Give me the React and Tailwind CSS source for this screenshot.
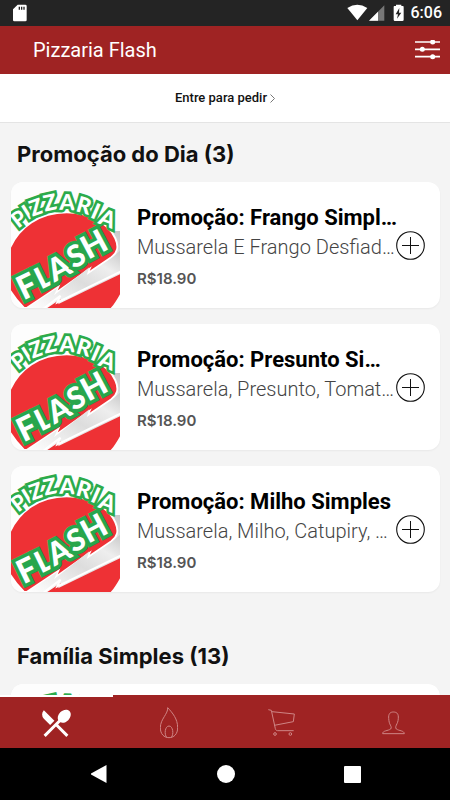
import { useState } from 'react';
import { MdRestaurantMenu } from 'react-icons/md';

const sections = [
	{
		id: 'promo',
		title: 'Promoção do Dia (3)',
		items: [
			{ id: 1, name: 'Promoção: Frango Simpl…', description: 'Mussarela E Frango Desfiad…', price: 'R$18.90' },
			{ id: 2, name: 'Promoção: Presunto Si…', description: 'Mussarela, Presunto, Tomat…', price: 'R$18.90' },
			{ id: 3, name: 'Promoção: Milho Simples', description: 'Mussarela, Milho, Catupiry, …', price: 'R$18.90' },
		],
	},
	{
		id: 'familia',
		title: 'Família Simples (13)',
		items: [{ id: 4, name: '', description: '', price: '' }],
	},
];

const tabs = [
	{ id: 'menu', label: 'Cardápio', icon: CutleryIcon },
	{ id: 'hot', label: 'Promoções', icon: FlameIcon },
	{ id: 'cart', label: 'Carrinho', icon: CartIcon },
	{ id: 'profile', label: 'Perfil', icon: PersonIcon },
];

// centre x, centre y, rotation, font size
const arcLetters = [
	['P', 56, 116, -38, 64],
	['I', 80, 96, -32, 64],
	['Z', 108, 81, -20, 66],
	['Z', 150, 67, -12, 66],
	['A', 202, 66, 2, 66],
	['R', 252, 76, 16, 66],
	['I', 287, 93, 24, 66],
	['A', 323, 115, 22, 68],
];

const flashLetters = [
	['F', 80, 318, -26, 98],
	['L', 130, 290, -26, 90],
	['A', 176, 262, -28, 94],
	['S', 228, 227, -26, 90],
	['H', 281, 192, -28, 96],
];

function CutleryIcon() {
	return <MdRestaurantMenu size={36} aria-hidden="true" />;
}

function FlameIcon() {
	return (
		<svg width="18" height="32" viewBox="0 0 54 96" fill="none" stroke="currentColor" strokeWidth="3" aria-hidden="true">
			<path d="M23 2 C25 20 1 36 1 62 C1 81 12 92 27 92 C42 92 53 81 53 62 C53 36 38 18 23 2Z" />
			<path d="M20 91 C12 82 15 57 27 57 C39 57 42 82 34 91" />
		</svg>
	);
}

function CartIcon() {
	return (
		<svg width="27" height="27" viewBox="0 0 81 81" fill="none" stroke="currentColor" strokeWidth="3" aria-hidden="true">
			<path d="M1 2 L10 4 L22 59 C23 63 25 65 29 65 L77 65" />
			<path d="M12 8 L79 15 L76 38 L19 49" />
			<circle cx="21" cy="75" r="4" />
			<circle cx="67" cy="75" r="4" />
		</svg>
	);
}

function PersonIcon() {
	return (
		<svg width="23" height="24" viewBox="0 0 69 72" fill="none" stroke="currentColor" strokeWidth="3" aria-hidden="true">
			<path d="M2 68 C2 58 18 60 26 54 C30 50 26 44 23 38 C21 33 20 24 20 18 C20 7 26 3 34 3 C43 3 49 7 49 18 C49 25 48 33 45 38 C42 44 39 50 43 54 C51 60 66 58 67 68Z" />
		</svg>
	);
}

function StatusBar() {
	return (
		<div className="flex h-[26px] shrink-0 items-center justify-between bg-[#242424] pr-2 pl-[13px] text-white">
			<svg width="14" height="18" viewBox="0 0 42 54" aria-hidden="true">
				<path d="M14 2 H37 Q41 2 41 6 V48 Q41 52 37 52 H4 Q0 52 0 48 V16Z" fill="#fff" />
				<path d="M17 8h4v9h-4z M24 8h4v9h-4z M31 8h4v9h-4z" fill="#242424" />
			</svg>
			<div className="flex items-center gap-1.5">
				<svg width="58" height="18" viewBox="0 0 174 54" aria-hidden="true">
					<path d="M1 12 Q31 -8 61 12 L31 49Z" fill="#fff" />
					<path d="M66 50 L112 4 V50Z" fill="#777" />
					<path d="M66 50 L93 23 V50Z" fill="#fff" />
					<path d="M142 6h5V2h16v4h5q2 0 2 4v37q0 4-4 4h-22q-4 0-4-4V10q0-4 2-4z" fill="#fff" />
					<path d="M157 12 L146 31 H153 L150 44 L163 26 H156Z" fill="#242424" />
				</svg>
				<span className="font-[Roboto] text-base leading-6 font-medium">6:06</span>
			</div>
		</div>
	);
}

function LogoLetters({ letters, stroke, strokeWidth }) {
	return (
		<g
			fontFamily="Lato, sans-serif"
			fontWeight="900"
			textAnchor="middle"
			paintOrder="stroke"
			fill="#fff"
			stroke={stroke}
			strokeWidth={strokeWidth}
			strokeMiterlimit="2"
		>
			{letters.map(([char, x, y, angle, size], i) => (
				<text key={i} x="0" y={size * 0.36} fontSize={size} transform={`translate(${x} ${y}) rotate(${angle})`}>
					{char}
				</text>
			))}
		</g>
	);
}

function Logo({ id }) {
	const gradId = `grey-${id}`;

	return (
		<svg className="block h-full w-full" viewBox="33 6 327 378" preserveAspectRatio="xMidYMin slice" aria-hidden="true">
			<defs>
				<linearGradient id={gradId} x1="0" y1="1" x2="1" y2="0">
					<stop offset="0" stopColor="#fff" />
					<stop offset="0.5" stopColor="#ddd" />
					<stop offset="0.75" stopColor="#eee" />
					<stop offset="1" stopColor="#c4c4c4" />
				</linearGradient>
			</defs>
			<rect x="28" y="6" width="340" height="378" fill="#fdfdfd" />
			<path d="M320 153 H368 V290 L150 384 H80Z" fill={`url(#${gradId})`} />
			<path d="M26 212 C55 140 120 97 200 97 C265 97 325 128 346 175 C358 202 352 218 334 232 L262 281 L268 268 L166 340 L174 322 L80 384 H72 C50 362 38 345 26 325Z" fill="#ee3135" stroke="#fff" strokeWidth="6" />
			<path d="M82 384 L172 324 L162 346 L268 262 L260 286 L338 232 L368 205 V276 L172 365 L181 350 L128 384Z" fill={`url(#${gradId})`} />
			<path d="M142 384 L182 357 L174 373 L364 281 V335 C354 355 345 370 332 384Z" fill="#ee3135" />
			<path d="M128 388 L181 347 L172 367 L368 272" fill="none" stroke="#fff" strokeWidth="6" />
			<LogoLetters letters={arcLetters} stroke="#2bab4b" strokeWidth="16" />
			<LogoLetters letters={flashLetters} stroke="#27a64c" strokeWidth="22" />
		</svg>
	);
}

function ProductCard({ item }) {
	return (
		<li className="flex h-[126px] overflow-hidden rounded-xl bg-white shadow-xs">
			<div className="w-[109px] shrink-0">
				<Logo id={item.id} />
			</div>
			<div className="flex min-w-0 flex-1 items-center pr-[15px] pl-[17px]">
				<div className="min-w-0 flex-1 pt-[3px] whitespace-nowrap">
					<h3 className="font-[Roboto] text-[22px] leading-7 font-bold text-black">{item.name}</h3>
					<p className="font-[Roboto] text-xl leading-[30px] font-light text-[#444]">{item.description}</p>
					<p className="mt-[7px] font-[Inter] text-[15px] leading-5 font-semibold text-[#555]">{item.price}</p>
				</div>
				<button type="button" aria-label={`Adicionar ${item.name}`} className="shrink-0">
					<svg width="29" height="29" viewBox="0 0 29 29" fill="none" stroke="#111" aria-hidden="true">
						<circle cx="14.5" cy="14.5" r="13.8" strokeWidth="1.1" />
						<path d="M6 14.5H23M14.5 6V23" strokeWidth="1" />
					</svg>
				</button>
			</div>
		</li>
	);
}

export default function App() {
	const [activeTab, setActiveTab] = useState('menu');

	return (
		<div className="flex h-screen flex-col overflow-hidden bg-[#f4f4f4] font-[Roboto]">
			<StatusBar />

			<header className="flex h-12 shrink-0 items-center justify-between bg-[#9f2323] pr-[10px] pl-[33px] text-white">
				<h1 className="font-[Roboto] text-xl leading-6 font-normal">Pizzaria Flash</h1>
				<button type="button" aria-label="Filtros">
					<svg width="25" height="20" viewBox="0 0 75 60" fill="#fff" stroke="#fff" strokeWidth="5" aria-hidden="true">
						<path d="M0 6H75M0 28H75M0 50H75" />
						<circle cx="53" cy="6" r="5" />
						<circle cx="22" cy="28" r="5" />
						<circle cx="53" cy="50" r="5" />
					</svg>
				</button>
			</header>

			<a
				href="#entrar"
				className="flex h-[49px] shrink-0 items-center justify-center gap-[3px] border-b border-[#e4e4e4] bg-white text-[13px] leading-5 font-medium text-[#111]"
			>
				Entre para pedir
				<svg width="5" height="9" viewBox="0 0 5 9" fill="none" stroke="#777" aria-hidden="true">
					<path d="M0.5 0.5L4.5 4.5L0.5 8.5" />
				</svg>
			</a>

			<main className="flex min-h-0 flex-1 flex-col gap-[33px] overflow-hidden pr-[10px] pl-[11px]">
				{sections.map((section) => (
					<section key={section.id} className="shrink-0">
						<h2 className="px-1.5 pt-4 pb-3 font-[Inter] text-[22px] leading-[31px] font-bold text-[#111]">
							{section.title}
						</h2>
						<ul className="space-y-4">
							{section.items.map((item) => (
								<ProductCard key={item.id} item={item} />
							))}
						</ul>
					</section>
				))}
			</main>

			<nav className="grid h-[53px] shrink-0 grid-cols-4 bg-[#9f2323] text-white">
				{tabs.map(({ id, label, icon: Icon }) => (
					<button
						key={id}
						type="button"
						aria-label={label}
						onClick={() => setActiveTab(id)}
						className={`flex items-center justify-center border-t-2 ${
							activeTab === id ? 'border-white text-white' : 'border-transparent text-[#cf8585]'
						}`}
					>
						<Icon />
					</button>
				))}
			</nav>

			<div className="flex h-[52px] shrink-0 items-center justify-around bg-black px-[35px]">
				<button type="button" aria-label="Voltar">
					<svg width="18" height="20" viewBox="0 0 18 20" fill="#fff" aria-hidden="true">
						<path d="M16.5 1V19L1 10.5V9.5Z" />
					</svg>
				</button>
				<button type="button" aria-label="Início" className="size-[18px] rounded-full bg-white" />
				<button type="button" aria-label="Recentes" className="size-[17px] rounded-[1px] bg-white" />
			</div>
		</div>
	);
}
